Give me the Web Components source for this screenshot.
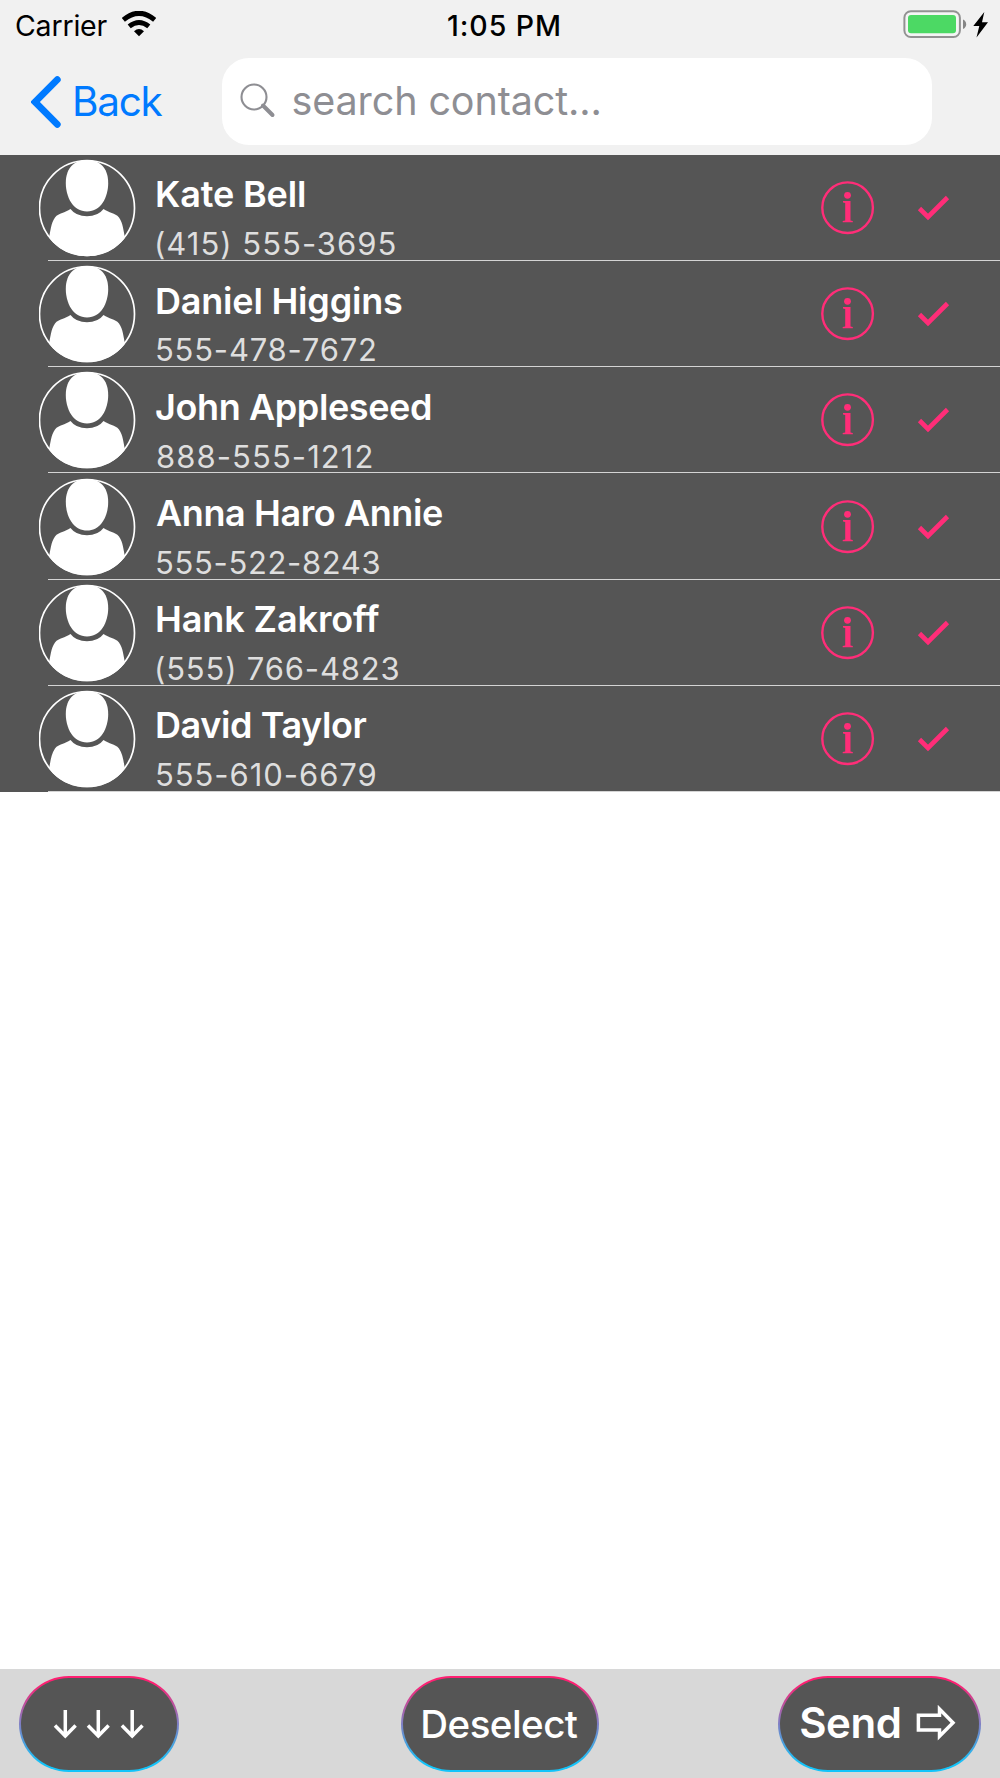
<!DOCTYPE html>
<html lang="en">
<head>
<meta charset="utf-8">
<title>Contacts</title>
<style>
html,body{margin:0;padding:0;background:#fff}
body{font-family:Inter,"Liberation Sans",sans-serif;width:1000px;height:1778px;overflow:hidden}
</style>
</head>
<body>
<contacts-screen></contacts-screen>
<script>
const define = (name, html, setup) => {
  const t = document.createElement('template');
  t.innerHTML = html;
  customElements.define(name, class extends HTMLElement {
    connectedCallback() {
      if (this.shadowRoot) return;
      this.attachShadow({mode: 'open'}).append(t.content.cloneNode(true));
      if (setup) setup(this, this.shadowRoot);
    }
  });
};

// One line of text tracked so that its ink starts at the box's left edge and spans `w` pixels.
const ctx = document.createElement('canvas').getContext('2d');
define('fit-text', `<style>
:host{display:block;line-height:1;white-space:pre;flex:none}
span{display:block}
</style><span><slot></slot></span>`, (el, root) => {
  const size = +el.getAttribute('size'), weight = el.getAttribute('weight') || 400, w = +el.getAttribute('w');
  const text = el.textContent;
  ctx.font = `${weight} ${size}px Inter`;
  const m = ctx.measureText(text);
  const ink = m.actualBoundingBoxLeft + m.actualBoundingBoxRight;
  el.style.fontSize = size + 'px';
  el.style.fontWeight = weight;
  el.style.width = w + 'px';
  const s = root.querySelector('span');
  s.style.letterSpacing = (w - ink) / (text.length - 1) + 'px';
  s.style.marginLeft = m.actualBoundingBoxLeft + 'px';
});

define('status-bar', `<style>
:host{display:flex;height:50px;padding:0 10px 0 16px;justify-content:space-between}
.l{display:flex;width:432px}
fit-text{margin-top:12px}
.wifi{margin:11px 0 0 14px}
.r{display:flex;margin-top:9px}
.gap{flex:1}
svg{display:block;flex:none}
</style>
<div class="l"><fit-text size="28.500" w="91.500">Carrier</fit-text>
<svg class="wifi" width="34" height="26" viewBox="0 0 34 26"><g fill="none" stroke="#000"><path d="M1.300 8.800Q17 -4.200 32.700 8.800" stroke-width="5"/><path d="M7.200 15.400Q17 7.600 26.800 15.400" stroke-width="4.900"/></g><path d="M12 20.300Q17 15.800 22 20.300L17 25.300Z"/></svg></div>
<fit-text size="28.500" weight="550" w="111">1:05 PM</fit-text>
<div class="gap"></div>
<div class="r"><svg width="87" height="32" viewBox="0 0 87 32"><rect x="1.400" y="2.200" width="55.500" height="25.800" rx="6.500" fill="#f5f5f5" stroke="#929292" stroke-width="2"/><rect x="5" y="6" width="48" height="18.300" rx="3" fill="#4cd964"/><path d="M60 10.500Q63.200 12 63.200 15.200Q63.200 18.500 60 20Z" fill="#858585"/><path d="M81.300 3L70.300 17H76.300L73.500 28.500L85 13.300H79Z"/></svg></div>`);

define('search-field', `<style>
:host{display:flex;box-sizing:border-box;width:710.500px;height:87px;border-radius:27px;background:#fff;color:#8e8e93;padding-left:18.500px}
svg{display:block;margin-top:25px;flex:none}
.t{padding:23.700px 0 0 17.500px}
</style>
<svg width="36" height="36" viewBox="0 0 36 36" fill="none" stroke="#8e8e93"><circle cx="14" cy="14" r="12.500" stroke-width="2.100"/><path d="M23 22.500L32.500 32" stroke-width="4" stroke-linecap="round"/></svg>
<div class="t"><slot></slot></div>`);

define('nav-bar', `<style>
:host{display:flex;height:105px;padding:8px 0 0 31px;box-sizing:border-box}
.back{display:flex;width:190.500px;color:#007aff}
svg{display:block;margin-top:18px}
.back fit-text{margin:23.800px 0 0 14px}
</style>
<div class="back"><svg width="30" height="52" viewBox="0 0 30 52"><path d="M26.300 3.700L4 26L26.300 48.300" fill="none" stroke="#007aff" stroke-width="6.800" stroke-linecap="round"/></svg><fit-text size="40.500" w="87.500">Back</fit-text></div>
<search-field><fit-text size="39.500" w="306">search contact...</fit-text></search-field>`);

define('contact-row', `<style>
:host{display:flex;height:106.220px;box-sizing:border-box;padding-left:39px;background:linear-gradient(#d4d4d4,#d4d4d4) 48px 100%/100% 1.300px no-repeat #555}
svg{display:block;flex:none}
.avatar{margin-top:4px}
.txt{display:flex;flex-direction:column;width:664px;margin-left:21px;padding-top:21.300px;gap:15.900px;color:#fff;box-sizing:border-box}
.phone{color:#dedede}
.name{margin-left:var(--shift,0)}
</style>
<svg class="avatar" width="97" height="98" viewBox="0 0 97 98"><defs><clipPath id="c"><circle cx="48" cy="49" r="48.300"/></clipPath></defs><g clip-path="url(#c)" fill="#fff"><path d="M48 1C60 1 69.200 8 69.200 24C69.200 38 62 52.500 48 52.500C34 52.500 26.800 38 26.800 24C26.800 8 36 1 48 1Z"/><path d="M31.500 50Q37 57.300 48 57.300Q59 57.300 64.500 50C70 54 76 53.500 80 58.500C84 64 84.500 72 86 79L70 98H26L10 79C11.500 72 12 64 16 58.500C20 53.500 26 54 31.500 50Z"/></g><circle cx="48" cy="49" r="47.500" fill="none" stroke="#fff" stroke-width="1.700"/></svg>
<div class="txt"></div>
<svg width="150" height="106" viewBox="0 0 150 106"><g fill="none" stroke="#ff2d78"><circle cx="26.600" cy="52.700" r="25.300" stroke-width="2.400"/><path d="M98.500 53.500L107 62L126.500 42.500" stroke-width="4.600"/></g><g fill="#ff2d78"><circle cx="26.500" cy="40.300" r="3.400"/><path d="M22 46.100H29.500V65.500L31.800 66V67.300H21.700V66L24.200 65.500V48L22 47.500Z"/></g></svg>`, (el, root) => {
  const [n, nw, p, pw] = ['name', 'nw', 'phone', 'pw'].map(a => el.getAttribute(a));
  root.querySelector('.txt').innerHTML = `<fit-text class="name" size="36" weight="600" w="${nw}">${n}</fit-text><fit-text class="phone" size="31" w="${pw}">${p}</fit-text>`;
});

define('pill-button', `<style>
:host{display:flex;box-sizing:border-box;height:96.500px;border:2px solid transparent;border-radius:50px/48px;background:linear-gradient(#555,#555) padding-box,linear-gradient(#ff1f72 8%,#8b77be 45%,#12c4fa 92%) border-box;color:#fff}
</style><slot></slot>`);

define('contacts-screen', `<style>
:host{display:flex;flex-direction:column;height:1778px;background:#fff}
header{background:#f1f1f1;height:155px;flex:none}
main{flex:1}
footer{display:flex;height:109px;box-sizing:border-box;background:#d8d8d8;padding:6.500px 19.500px 0 19px;flex:none}
svg{display:block;flex:none}
.arrows{width:160px}
.deselect{width:198px;margin-left:222px}
.send{width:203px;margin-left:179px}
.deselect fit-text{margin:27.200px 0 0 20.500px}
.send fit-text{margin:24.500px 0 0 20.500px}
.send svg{margin:26.500px 0 0 14px}
.j{--shift:-1px}
</style>
<header><status-bar></status-bar><nav-bar></nav-bar></header>
<main>
<contact-row name="Kate Bell" nw="147" phone="(415) 555-3695" pw="237.500"></contact-row>
<contact-row name="Daniel Higgins" nw="245" phone="555-478-7672" pw="218"></contact-row>
<contact-row class="j" name="John Appleseed" nw="275" phone="888-555-1212" pw="214.500"></contact-row>
<contact-row class="j" name="Anna Haro Annie" nw="286" phone="555-522-8243" pw="222.500"></contact-row>
<contact-row name="Hank Zakroff" nw="222.500" phone="(555) 766-4823" pw="241.500"></contact-row>
<contact-row name="David Taylor" nw="209.500" phone="555-610-6679" pw="218.500"></contact-row>
</main>
<footer>
<pill-button class="arrows"><svg width="155" height="92" viewBox="0 0 155 92" fill="none" stroke="#fff" stroke-width="3.500"><path d="M44.300 32V59M34 47.500L44.300 58L54.600 47.500M77.300 32V59M67 47.500L77.300 58L87.600 47.500M111.200 32V59M100.900 47.500L111.200 58L121.500 47.500"/></svg></pill-button>
<pill-button class="deselect"><fit-text size="38.500" weight="500" w="154.500">Deselect</fit-text></pill-button>
<pill-button class="send"><fit-text size="42" weight="600" w="99.500">Send</fit-text><svg width="44" height="40" viewBox="0 0 44 40" fill="none" stroke="#fff" stroke-width="3.500"><path d="M4.400 11.300H25.500V5L39 18.700L25.500 32.300V26H4.400Z"/></svg></pill-button>
</footer>`);
</script>
</body>
</html>
